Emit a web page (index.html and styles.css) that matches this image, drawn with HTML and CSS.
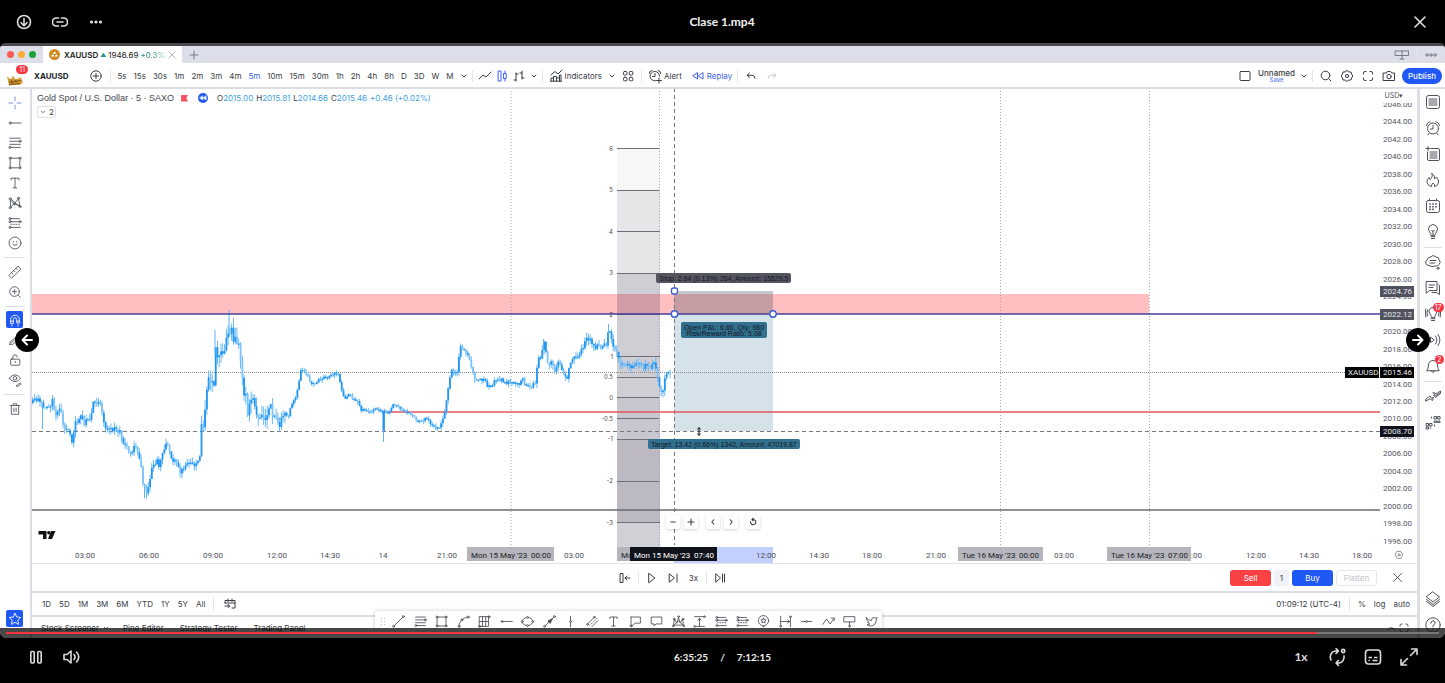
FILE: index.html
```html
<!DOCTYPE html>
<html lang="en">
<head>
<meta charset="utf-8">
<title>Clase 1.mp4</title>
<link rel="stylesheet" href="styles.css">
</head>
<body>
<svg class="defs" aria-hidden="true">
  <symbol id="download" viewBox="0 0 16 16"><circle cx="8" cy="8" r="6.500"/><path d="M8 4.500v7M5 8.700l3 3 3-3"/></symbol>
  <symbol id="link" viewBox="0 0 16 16"><path d="M6.500 4H4.500a4 4 0 0 0 0 8h2M9.500 4h2a4 4 0 0 1 0 8h-2M5 8h6"/></symbol>
  <symbol id="more" viewBox="0 0 16 16"><g fill="currentColor" stroke="none"><circle cx="3.500" cy="8" r="1.600"/><circle cx="8" cy="8" r="1.600"/><circle cx="12.500" cy="8" r="1.600"/></g></symbol>
  <symbol id="close" viewBox="0 0 16 16"><path d="M3 3l10 10M13 3L3 13"/></symbol>
  <symbol id="plus" viewBox="0 0 16 16"><path d="M8 4v8M4 8h8"/></symbol>
  <symbol id="minus" viewBox="0 0 16 16"><path d="M5 8h6"/></symbol>
  <symbol id="pluscircle" viewBox="0 0 16 16"><circle cx="8" cy="8" r="5.200"/><path d="M8 5.300v5.400M5.300 8h5.400"/></symbol>
  <symbol id="down" viewBox="0 0 16 16"><path d="M6 7l2 2 2-2"/></symbol>
  <symbol id="up" viewBox="0 0 16 16"><path d="M4 10q4-5 8 0"/></symbol>
  <symbol id="left" viewBox="0 0 16 16"><path d="M9 5L6.500 8 9 11"/></symbol>
  <symbol id="right" viewBox="0 0 16 16"><path d="M7 5l2.500 3L7 11"/></symbol>
  <symbol id="reset" viewBox="0 0 16 16"><path d="M4.800 7.500a3.500 3.500 0 1 0 3.500-2.800H6.500M8.300 2.800L6.500 4.700l1.800 1.900"/></symbol>
  <symbol id="line" viewBox="0 0 16 16"><path d="M2 11l4-4 3 2 5-5"/></symbol>
  <symbol id="candles" viewBox="0 0 16 16"><path d="M4.500 3h2.500v10H4.500zM11 3v2.500M11 10.500V13M9.800 5.500h2.400v5H9.800z"/></symbol>
  <symbol id="bars" viewBox="0 0 16 16"><path d="M5 5v8M3 12h2M5 6h2M11 3v8M9 5h2M11 10h2"/></symbol>
  <symbol id="indicators" viewBox="0 0 16 16"><path d="M3 7l4-3.500L10 6l4-4M3 13v-3h2.500v3M5.500 11.500V8.500h3V13M8.500 10h3v3M11.500 13V7H13v6M2.500 13.200h11"/></symbol>
  <symbol id="grid4" viewBox="0 0 16 16"><rect x="3.500" y="3.500" width="3.500" height="3.500" rx="1"/><rect x="9.300" y="3.500" width="3.500" height="3.500" rx="1"/><rect x="3.500" y="9.300" width="3.500" height="3.500" rx="1"/><rect x="9.300" y="9.300" width="3.500" height="3.500" rx="1"/></symbol>
  <symbol id="alert" viewBox="0 0 16 16"><path d="M12.500 8a4.700 4.700 0 1 0-4 4.800M8 5.500V8.500H5.500M2.500 5.500L2.800 3.600 5 2.500M11 2.500l2.200 1.100.3 1.900M12 10v5M9.500 12.500h5"/></symbol>
  <symbol id="rewind" viewBox="0 0 16 16"><path d="M7.500 5v6L3 8zM13 5v6L8.500 8z"/></symbol>
  <symbol id="undo" viewBox="0 0 16 16"><path d="M6.500 5L4 7.300l2.500 2.300M4.300 7.300H9q3 0 3 3"/></symbol>
  <symbol id="redo" viewBox="0 0 16 16"><path d="M9.500 5L12 7.300 9.500 9.600M11.700 7.300H7q-3 0-3 3"/></symbol>
  <symbol id="square" viewBox="0 0 16 16"><rect x="3" y="3.500" width="10" height="9" rx="1"/></symbol>
  <symbol id="search" viewBox="0 0 16 16"><circle cx="7.500" cy="7.500" r="4.300"/><path d="M10.700 10.700L13 13"/></symbol>
  <symbol id="gear" viewBox="0 0 16 16"><path d="M8 2.500l1.800 1.400 2.200.1.600 2.100 1.200 1.900-1.200 1.900-.6 2.100-2.200.1L8 13.500l-1.800-1.400-2.200-.1-.6-2.100L2.200 8l1.200-1.900L4 4l2.200-.1z"/><circle cx="8" cy="8" r="1.600"/></symbol>
  <symbol id="full" viewBox="0 0 16 16"><path d="M3.500 6V5q0-1.500 1.500-1.500h1M10 3.500h1q1.500 0 1.500 1.500v1M12.500 10v1q0 1.500-1.500 1.500h-1M6 12.500H5q-1.500 0-1.500-1.500v-1"/></symbol>
  <symbol id="camera" viewBox="0 0 16 16"><path d="M2.500 5h3L6.300 3.500h3.400L10.500 5h3v7.500h-11z"/><circle cx="8" cy="8.600" r="2.200"/></symbol>
  <symbol id="layout" viewBox="0 0 16 16"><path d="M1.500 4h13v4.500h-13zM8 4v8M6 12h4"/></symbol>
  <symbol id="dots" viewBox="0 0 16 16"><circle cx="4" cy="8" r="1.200"/><circle cx="8" cy="8" r="1.200"/><circle cx="12" cy="8" r="1.200"/></symbol>
  <symbol id="cross" viewBox="0 0 16 16"><path d="M8 1v4.500M8 10.500V15M1 8h4.500M10.500 8H15"/></symbol>
  <symbol id="hray" viewBox="0 0 16 16"><circle cx="2.500" cy="8" r="1.200"/><path d="M3.700 8H15"/></symbol>
  <symbol id="fib" viewBox="0 0 16 16"><path d="M2 2.500h12M2 6h10.500M2 9.500h12M3.600 13H14"/><circle cx="13.800" cy="6" r="1.200"/><circle cx="2.200" cy="13" r="1.200"/></symbol>
  <symbol id="rect" viewBox="0 0 16 16"><path d="M3.700 2.500h8.600M3.700 13.500h8.600M2.500 3.700v8.600M13.500 3.700v8.600"/><circle cx="2.500" cy="2.500" r="1.200"/><circle cx="13.500" cy="2.500" r="1.200"/><circle cx="2.500" cy="13.500" r="1.200"/><circle cx="13.500" cy="13.500" r="1.200"/></symbol>
  <symbol id="text" viewBox="0 0 16 16"><path d="M3.500 4.500v-2h9v2M8 2.500v11M6 13.500h4"/></symbol>
  <symbol id="pattern" viewBox="0 0 16 16"><path d="M2.800 12V4.500l4.200 4.500 5-6 1.500 8L7 9l-4 3.500M4 4l9 8"/><circle cx="2.500" cy="3.300" r="1.200"/><circle cx="2.500" cy="13.300" r="1.200"/><circle cx="12" cy="2.600" r="1.200"/><circle cx="13.800" cy="12" r="1.200"/><circle cx="7" cy="9" r="1.100"/></symbol>
  <symbol id="position" viewBox="0 0 16 16"><path d="M3.600 3H13M3.600 6.500h8.800M3.600 13H14"/><path d="M3 9.500h11" stroke-dasharray="1 2"/><circle cx="2.300" cy="3" r="1.200"/><circle cx="2.300" cy="6.500" r="1.200"/><circle cx="13.700" cy="6.500" r="1.200"/><circle cx="2.300" cy="13" r="1.200"/></symbol>
  <symbol id="smile" viewBox="0 0 16 16"><circle cx="8" cy="8" r="6.800"/><path d="M5.500 9.500q2.500 2.800 5 0M6 6v.9M10 6v.9"/></symbol>
  <symbol id="ruler" viewBox="0 0 16 16"><path d="M1.200 11.500L11.500 1.200l3.300 3.300L4.500 14.800zM4 8.700l1.500 1.500M6.500 6.200L8 7.700M9 3.700l1.500 1.500"/></symbol>
  <symbol id="zoomin" viewBox="0 0 16 16"><circle cx="7.500" cy="7.500" r="5.500"/><path d="M11.500 11.500L14 14M7.500 5.200v4.600M5.200 7.500h4.600"/></symbol>
  <symbol id="magnet" viewBox="0 0 16 16"><path d="M3 11.500V7.500a5 5 0 0 1 10 0v4h-3V7.500a2 2 0 0 0-4 0v4zM3 9.300h3M10 9.300h3M4.500 13.500V15M11.500 13.500V15"/></symbol>
  <symbol id="pencil" viewBox="0 0 16 16"><path d="M2 13q0-4 3-5l6-5 3 2-6 6q-2 3-6 2zM4 11l7-6"/></symbol>
  <symbol id="lock" viewBox="0 0 16 16"><rect x="3" y="7" width="10.500" height="7" rx="1"/><path d="M5.500 7V4.500a2.500 2.500 0 0 1 5 0M8.300 9.500v1.500"/></symbol>
  <symbol id="eye" viewBox="0 0 16 16"><path d="M1.500 6q6.500-8 13 0-6.500 8-13 0zM9.500 14.500l4-3 1.500 1-3 2.500z"/><circle cx="8" cy="6" r="2"/></symbol>
  <symbol id="trash" viewBox="0 0 16 16"><path d="M2.500 4h11M6 4V2h4v2M3.800 4v10h8.400V4M6.700 7v4M9.300 7v4"/></symbol>
  <symbol id="star" viewBox="0 0 16 16"><path d="M8 1.500l2 4.200 4.500.6-3.300 3.200.8 4.600L8 11.800l-4 2.300.8-4.600L1.500 6.300 6 5.700z"/></symbol>
  <symbol id="watch" viewBox="0 0 16 16"><rect x="1.500" y="1.500" width="13" height="13" rx="2"/><path d="M4 5h8M4 7h8M4 9h8M4 11h8"/></symbol>
  <symbol id="clock" viewBox="0 0 16 16"><circle cx="8" cy="8.500" r="5.500"/><path d="M8 5.500v3.500H5.500M1.500 5.500q0-3 3.500-3.800M14.500 5.500q0-3-3.500-3.800M4 13.500l-1 1.500M12 13.500l1 1.500"/></symbol>
  <symbol id="addlist" viewBox="0 0 16 16"><path d="M6 2.500h7q1.500 0 1.500 1.500v9q0 1.500-1.500 1.500H4q-1.500 0-1.500-1.500V6M3 .5v4M1 2.500h4M5 6h7M5 8h7M5 10h7M5 12h7"/></symbol>
  <symbol id="flame" viewBox="0 0 16 16"><path d="M7 1.500q3.500 2.500 2.500 5.500L11.500 5q3.500 4 1.500 7-1.500 2.500-3.500 2.500 1-2-1.500-3.500-1.800 2-1.500 3.500Q3 14 2 10.500q-.5-3 2-5l1 2q3-2 2-6z"/></symbol>
  <symbol id="calendar" viewBox="0 0 16 16"><rect x="1.500" y="2.500" width="13" height="12" rx="2"/><path d="M4.500 1v1.500M11.500 1v1.500"/><path d="M4.200 6h8M4.200 8.700h8M4.200 11.400h5" stroke-linecap="butt" stroke-width="1.600" stroke-dasharray="1.600 1.400"/></symbol>
  <symbol id="bulb" viewBox="0 0 16 16"><path d="M6 11q0-1.500-1.500-3a4.500 4.500 0 1 1 7 0Q10 9.500 10 11zM6 12.700h4M6.500 14.500h3M8 11V7M6.700 6.500L8 7.500l1.300-1"/></symbol>
  <symbol id="cloud" viewBox="0 0 16 16"><path d="M3.500 11.500a3 3 0 0 1-1.500-5.500Q2.500 3.200 5.500 3Q8 0 11 3q3 0 3 3 2.500 2.500 0 4.500-1 2-3.500 1.500L7.500 12.500zM5 6.500h6M5 9h4.500"/><circle cx="13" cy="14.300" r="1"/></symbol>
  <symbol id="chat" viewBox="0 0 16 16"><path d="M1.500 1.500h10.500v9H4.500l-3 2.500zM13.500 4.500l1 1v9L11.500 12.500H7M4 5h5.500M4 7.500h4"/></symbol>
  <symbol id="bulbwave" viewBox="0 0 16 16"><path d="M6.300 11q0-1.500-1.300-3a4 4 0 1 1 6 0Q9.700 9.500 9.700 11zM6 12.700h4M6.500 14.500h3M2.500 4q-1.200 3 0 6M.8 3q-1 4 0 8M13.500 4q1.200 3 0 6M15.200 3q1 4 0 8"/></symbol>
  <symbol id="stream" viewBox="0 0 16 16"><path d="M5.500 5.500v5L9 8zM10.500 4q3 4 0 8M13 2.500q4 5.500 0 11"/></symbol>
  <symbol id="bell" viewBox="0 0 16 16"><path d="M2 12.500q1.500-1.500 1.500-5.500a4.500 4.500 0 0 1 9 0q0 4 1.500 5.500zM6.500 12.700a1.500 1.500 0 0 0 3 0"/></symbol>
  <symbol id="dom" viewBox="0 0 16 16"><path d="M.5 11.500L5 8l1.500 2.200 2-.7-1 3L5 10.800 1 13zM8 4.500l2.500 3.500 5-3.500M9 4.500l2 1.500L15.500 3v1.500M8.500 7l2 2.500 5-4"/></symbol>
  <symbol id="objects" viewBox="0 0 16 16"><path d="M9.500 2.500h2V5h-2zM13 2.500h2V5h-2zM1.500 9.500h2V12h-2zM1.500 13h2v2h-2zM5 9.500h2V12H5zM9.500 7h2v1.500h-2zM13 7h2v1.500h-2z"/><path d="M6.500 3v3M9.500 11v3M5 14h2" stroke-dasharray="1 2"/></symbol>
  <symbol id="layers" viewBox="0 0 16 16"><path d="M8 1l6.500 5L8 11 1.500 6zM1.500 8.500L8 13.500l6.500-5M1.500 10.500l6.500 5 6.500-5"/></symbol>
  <symbol id="help" viewBox="0 0 16 16"><circle cx="8" cy="8" r="7.200"/><path d="M5.800 6.300q0-2.500 2.200-2.500t2.200 2.200q0 1.300-2.200 2.500v1.300M8 11.500v.8"/></symbol>
  <symbol id="tostart" viewBox="0 0 16 16"><path d="M3.500 3.500H6v9H3.500zM8 8h5M10 6L8 8l2 2"/></symbol>
  <symbol id="play" viewBox="0 0 16 16"><path d="M5 3.500l6 4.500-6 4.500z"/></symbol>
  <symbol id="step" viewBox="0 0 16 16"><path d="M4.500 4l5 4-5 4zM12 4v8"/></symbol>
  <symbol id="toend" viewBox="0 0 16 16"><path d="M4 4l4.500 4L4 12zM10.500 4v8M12.500 4v8"/></symbol>
  <symbol id="goto" viewBox="0 0 16 16"><path d="M3 7V4.500h10V12h-3M6 3v2.500M10 3v2.500M3 7h10M3 10h4.500M6 8.300l1.700 1.700L6 11.700"/></symbol>
  <symbol id="target" viewBox="0 0 16 16"><path d="M5 2.500h6L14 8l-3 5.500H5L2 8z"/><circle cx="8" cy="8" r="1.800"/></symbol>
  <symbol id="trend" viewBox="0 0 16 16"><circle cx="2" cy="14" r="1.200"/><circle cx="14" cy="2" r="1.200"/><path d="M2.900 13.100L13.100 2.900"/></symbol>
  <symbol id="curve" viewBox="0 0 16 16"><circle cx="2.500" cy="14" r="1.200"/><circle cx="6" cy="6" r="1.200"/><circle cx="13.800" cy="2.500" r="1.200"/><path d="M2.500 12.800q.3-4 2.700-6M7 5.300Q9 3 12.600 2.700"/></symbol>
  <symbol id="gann" viewBox="0 0 16 16"><path d="M2 2h11v12H2zM5.500 2v12M9.500 2v12M2 8h11"/><circle cx="13.500" cy="2.200" r="1.200"/><circle cx="2" cy="14" r="1.200"/></symbol>
  <symbol id="ellipse" viewBox="0 0 16 16"><ellipse cx="8" cy="8" rx="6.500" ry="5"/><circle cx="1.500" cy="8" r="1.200" fill="#fff"/><circle cx="14.500" cy="8" r="1.200" fill="#fff"/><circle cx="8" cy="3" r="1.200" fill="#fff"/><circle cx="8" cy="13" r="1.200" fill="#fff"/></symbol>
  <symbol id="arrow" viewBox="0 0 16 16"><circle cx="2" cy="14" r="1.200"/><circle cx="14" cy="2" r="1.200"/><path d="M3 13L13 3"/><path d="M11.500 4.500L6 7.500 8.500 10z" fill="currentColor"/></symbol>
  <symbol id="vline" viewBox="0 0 16 16"><path d="M8 1.500v5.300M8 9.200v5.300"/><circle cx="8" cy="8" r="1.200"/></symbol>
  <symbol id="channel" viewBox="0 0 16 16"><path d="M2.500 10.500l7-7M7.500 14l7-7"/><path d="M4.500 13L13.500 4" stroke-dasharray="1 2"/><circle cx="1.800" cy="11.500" r="1"/><circle cx="10.200" cy="2.700" r="1"/></symbol>
  <symbol id="callout" viewBox="0 0 16 16"><path d="M2.500 2.500H14V10H7.500L3.500 13.500M2.500 2.500v10"/><circle cx="2.500" cy="13.500" r="1.200"/></symbol>
  <symbol id="comment" viewBox="0 0 16 16"><path d="M2 2.500h12.500v8.500H7.500L5 13.500V11H2z"/></symbol>
  <symbol id="crown" viewBox="0 0 16 16"><path d="M2 12l1-7 3 5 2-7 2 7 3-5 1 7zM3 12l5-5 5 5"/><circle cx="8" cy="2" r="1"/><circle cx="2.500" cy="5" r="1"/><circle cx="13.500" cy="5" r="1"/><circle cx="1.500" cy="13.500" r="1"/><circle cx="14.500" cy="13.500" r="1"/></symbol>
  <symbol id="range" viewBox="0 0 16 16"><path d="M2 2h11M3.500 14H14M8 14V4M6 6.500L8 4l2 2.500"/><circle cx="14" cy="2" r="1"/><circle cx="2" cy="14" r="1"/></symbol>
  <symbol id="daterange" viewBox="0 0 16 16"><path d="M2 1.500v11M14 3.500v11M2 8h11M10.500 6L13 8l-2.500 2"/><circle cx="2" cy="13.800" r="1"/><circle cx="14" cy="2.200" r="1"/></symbol>
  <symbol id="pin" viewBox="0 0 16 16"><circle cx="8" cy="7" r="6.300"/><path d="M8 3.800l1 2 2.200.3-1.600 1.500.4 2.200L8 8.800 6 9.800l.4-2.200L4.800 6.100 7 5.800zM7 13.500l1 1.500 1-1.500"/></symbol>
  <symbol id="hline" viewBox="0 0 16 16"><path d="M1.500 8h5.300M9.200 8h5.300"/><circle cx="8" cy="8" r="1.200"/></symbol>
  <symbol id="poly" viewBox="0 0 16 16"><path d="M1 11.500L5.500 5l4.500 6 5-7M11.500 3.800H15V7"/></symbol>
  <symbol id="sign" viewBox="0 0 16 16"><path d="M1.500 2h13v6.500h-13zM8 8.500v4"/><circle cx="8" cy="13.700" r="1.100"/></symbol>
  <symbol id="bird" viewBox="0 0 16 16"><path d="M1.500 3.500q3 3.500 6.500 3.300Q8 3 11 3q1.500 0 2.200.9l1.800-.6-1.100 2Q14 13 7 13.500q-2.800 0-4.500-1.500 2.500 0 3.500-1-2.300-.7-2.800-2.500h1.300Q1.500 7 1.500 3.500z"/></symbol>
  <symbol id="pause" viewBox="0 0 20 20"><rect x="4.800" y="4.500" width="3.400" height="11.500" rx="1"/><rect x="11.800" y="4.500" width="3.400" height="11.500" rx="1"/></symbol>
  <symbol id="volume" viewBox="0 0 20 20"><path d="M2 7.500h3l4-3.500v12l-4-3.500H2zM12 7.500q2 2.500 0 5M14.500 5q4.500 5 0 10"/></symbol>
  <symbol id="loop" viewBox="0 0 20 20"><path d="M4 13A6 6 0 0 1 8.500 4h2.500M9 1.500L11.500 4 9 6.500M17 9a6 6 0 0 1-4.500 7H9M11.500 13.500L9 16l2.500 2.500"/><circle cx="16.200" cy="4" r="1.600"/></symbol>
  <symbol id="captions" viewBox="0 0 20 20"><rect x="2.500" y="3" width="15" height="14" rx="3"/><path d="M5.500 10.500h3.500M11 10.500h3.500M5.500 13.500H7M9.500 13.500h5" stroke-linecap="butt"/></symbol>
  <symbol id="expand" viewBox="0 0 20 20"><path d="M11.500 8.500L18 2M12.500 2H18v5.500M8.500 11.500L2 18M2 12.500V18h5.500"/></symbol>
  <symbol id="arrowleft" viewBox="0 0 16 16"><path d="M13 8H3.500M8 3.500L3.500 8 8 12.500"/></symbol>
  <symbol id="arrowright" viewBox="0 0 16 16"><path d="M3 8h9.500M8 3.500L12.500 8 8 12.500"/></symbol>
</svg>

<header class="player-head">
  <div class="head-tools">
    <button aria-label="Download"><svg class="ic"><use href="#download"/></svg></button>
    <button aria-label="Copy link"><svg class="ic"><use href="#link"/></svg></button>
    <button aria-label="More"><svg class="ic"><use href="#more"/></svg></button>
  </div>
  <h1>Clase 1.mp4</h1>
  <div class="head-close"><button aria-label="Close"><svg class="ic"><use href="#close"/></svg></button></div>
</header>

<main class="stage">
  <div class="tabs">
    <div class="lights"><i class="red"></i><i class="amber"></i><i class="green"></i></div>
    <div class="tab">
      <svg class="coin" viewBox="0 0 10 10"><circle cx="5" cy="5" r="5" fill="#cf8a20"/><path d="M3.700 4.300l.6-1.500h1.400l.6 1.500zM1.900 6.900l.6-1.700h1.700l.6 1.700zM5.200 6.900l.6-1.700h1.700l.6 1.700z" fill="#fff"/></svg>
      <b>XAUUSD</b><span class="tri">▲</span><span class="quote">1946.69</span><span class="gain">+0.3%</span>
      <button aria-label="Close tab"><svg class="ic"><use href="#close"/></svg></button>
    </div>
    <button class="newtab" aria-label="New tab"><svg class="ic"><use href="#plus"/></svg></button>
    <div class="tabs-end"><button aria-label="Layout"><svg class="ic"><use href="#layout"/></svg></button><i class="vsep"></i><button aria-label="Menu"><svg class="ic"><use href="#dots"/></svg></button></div>
  </div>

  <div class="toolbar">
    <button class="avatar" aria-label="Account"><svg viewBox="0 0 18 12"><path d="M1 3l4 3 2-4 2 4 6-2 1 3 1 1-2 3-12 1z" fill="#d79a35"/><path d="M3 9l12-2M5 6l1 4M9 6l2 3M3 11l11-1" stroke="#7c4d12" fill="none"/></svg><span class="badge">11</span></button>
    <button class="symbol">XAUUSD</button>
    <button class="compare" aria-label="Compare"><svg class="ic"><use href="#pluscircle"/></svg></button><i class="vsep"></i>
    <div class="frames"><button>5s</button><button>15s</button><button>30s</button><button>1m</button><button>2m</button><button>3m</button><button>4m</button><button class="on">5m</button><button>10m</button><button>15m</button><button>30m</button><button>1h</button><button>2h</button><button>4h</button><button>8h</button><button>D</button><button>3D</button><button>W</button><button>M</button></div>
    <button aria-label="More intervals"><svg class="ic"><use href="#down"/></svg></button><i class="vsep"></i>
    <div class="styles"><button aria-label="Line"><svg class="ic"><use href="#line"/></svg></button><button class="on" aria-label="Candles"><svg class="ic"><use href="#candles"/></svg></button><button aria-label="Bars"><svg class="ic"><use href="#bars"/></svg></button><button class="tight" aria-label="More styles"><svg class="ic"><use href="#down"/></svg></button></div><i class="vsep"></i>
    <button class="label first"><svg class="ic"><use href="#indicators"/></svg>Indicators</button>
    <button aria-label="Favourite indicators"><svg class="ic"><use href="#down"/></svg></button>
    <button aria-label="Templates"><svg class="ic"><use href="#grid4"/></svg></button><i class="vsep wide"></i>
    <button class="label"><svg class="ic"><use href="#alert"/></svg>Alert</button>
    <button class="label replay on"><svg class="ic"><use href="#rewind"/></svg>Replay</button><i class="vsep wide"></i>
    <button aria-label="Undo"><svg class="ic"><use href="#undo"/></svg></button>
    <button class="faint" aria-label="Redo"><svg class="ic"><use href="#redo"/></svg></button>
    <div class="toolbar-end">
      <button aria-label="Layout"><svg class="ic"><use href="#square"/></svg></button>
      <button class="saved"><span>Unnamed</span><small>Save</small></button>
      <button class="narrow" aria-label="Layouts"><svg class="ic"><use href="#down"/></svg></button><i class="vsep"></i>
      <button aria-label="Search"><svg class="ic"><use href="#search"/></svg></button>
      <button aria-label="Settings"><svg class="ic"><use href="#gear"/></svg></button>
      <button aria-label="Fullscreen"><svg class="ic"><use href="#full"/></svg></button>
      <button aria-label="Snapshot"><svg class="ic"><use href="#camera"/></svg></button>
      <button class="publish">Publish</button>
    </div>
  </div>

  <div class="work">
    <nav class="rail left-rail">
      <button class="blue" aria-label="Cross"><svg class="ic"><use href="#cross"/></svg></button>
      <button aria-label="Ray"><svg class="ic"><use href="#hray"/></svg></button>
      <button aria-label="Fibonacci"><svg class="ic"><use href="#fib"/></svg></button>
      <button aria-label="Rectangle"><svg class="ic"><use href="#rect"/></svg></button>
      <button aria-label="Text"><svg class="ic"><use href="#text"/></svg></button>
      <button aria-label="Pattern"><svg class="ic"><use href="#pattern"/></svg></button>
      <button aria-label="Position"><svg class="ic"><use href="#position"/></svg></button>
      <button aria-label="Icons"><svg class="ic"><use href="#smile"/></svg></button>
      <i class="hsep"></i>
      <button aria-label="Measure"><svg class="ic"><use href="#ruler"/></svg></button>
      <button aria-label="Zoom in"><svg class="ic"><use href="#zoomin"/></svg></button>
      <i class="hsep"></i>
      <button class="solid" aria-label="Magnet"><svg class="ic"><use href="#magnet"/></svg></button>
      <button aria-label="Keep drawing"><svg class="ic"><use href="#pencil"/></svg></button>
      <button aria-label="Lock"><svg class="ic"><use href="#lock"/></svg></button>
      <button aria-label="Hide"><svg class="ic"><use href="#eye"/></svg></button>
      <i class="hsep"></i>
      <button aria-label="Remove"><svg class="ic"><use href="#trash"/></svg></button>
      <button class="solid last" aria-label="Favourites"><svg class="ic"><use href="#star"/></svg></button>
    </nav>

    <section class="center">
      <div class="chart">
        <div class="plot-col">
          <svg class="plot" role="img" aria-label="Gold Spot price chart">
            <g transform="translate(-32 -89)">
              <rect x="32" y="294" width="1117" height="20" fill="#ffbfc1"/>
              <g fill="#3a3350">
                <rect x="617" y="149" width="43" height="41" opacity=".04"/>
                <rect x="617" y="190" width="43" height="83" opacity=".13"/>
                <rect x="617" y="273" width="43" height="124" opacity=".24"/>
                <rect x="617" y="397" width="43" height="42" opacity=".28"/>
                <rect x="617" y="439" width="43" height="83" opacity=".34"/>
                <rect x="617" y="522" width="43" height="30" opacity=".23"/>
              </g>
              <path class="level" d="M617 148.500h43M617 190.500h43M617 231.500h43M617 273.500h43M617 314.500h43M617 356.500h43M617 377.500h43M617 397.500h43M617 418.500h43M617 439.500h43M617 481.500h43M617 522.500h43"/>
              <rect x="674" y="291" width="99" height="23" fill="#55586a" opacity=".33"/>
              <rect x="674" y="314" width="99" height="117" fill="#2f6f96" opacity=".2"/>
              <path class="dotted" d="M511 88V548M659.500 88V548M1000.500 88V548M1149.500 88V548"/>
              <path class="dashed" d="M674.500 88V548"/>
              <line class="last-price" x1="32" x2="120%" y1="372.500" y2="372.500"/>
              <line x1="383" x2="120%" y1="412" y2="412" stroke="#e0565b" stroke-width="1.500"/>
              <line class="dashed" x1="32" x2="120%" y1="431.500" y2="431.500"/>
              <line x1="32" x2="120%" y1="510" y2="510" stroke="#6c6970" stroke-width="1.500"/>
              <g id="series"></g>
              <line x1="32" x2="120%" y1="314" y2="314" stroke="#4a3d99" stroke-width="1.500"/>
              <g class="level-text">
                <text x="613" y="151">6</text><text x="613" y="192">5</text><text x="613" y="234">4</text><text x="613" y="275">3</text><text x="613" y="317">2</text><text x="613" y="359">1</text><text x="613" y="379">0.5</text><text x="613" y="400">0</text><text x="613" y="421">-0.5</text><text x="613" y="441">-1</text><text x="613" y="483">-2</text><text x="613" y="525">-3</text>
              </g>
              <rect x="656" y="273" width="135" height="10" rx="2" fill="#555562"/>
              <rect x="681" y="322" width="86" height="16" rx="2" fill="#31708f"/>
              <rect x="648" y="439" width="152" height="10" rx="2" fill="#31708f"/>
              <g class="tip-text">
                <text x="724" y="281">Stop: 2.64 (0.13%) 264, Amount: 15529.5</text>
                <text x="724" y="330">Open P&amp;L: 6.66, Qty: 980</text>
                <text x="724" y="336">Risk/Reward Ratio: 5.08</text>
                <text x="724" y="447">Target: 13.42 (0.66%) 1342, Amount: 47019.87</text>
              </g>
              <g fill="#fff" stroke="#3d5fd0" stroke-width="1.400"><rect x="671.500" y="288" width="6" height="6" rx="2"/><circle cx="674.500" cy="314" r="3.200"/><circle cx="773" cy="314" r="3.200"/></g>
              <path d="M699 428v7M697.500 429.500L699 427.500l1.500 2M697.500 433.500l1.500 2 1.500-2" stroke="#111" fill="none"/>
              <g fill="#111"><path d="M38.500 531h8v8h-3.500v-4.500h-4.500zM51 531h4.500l-3.500 8h-4z"/><circle cx="48.800" cy="532.700" r="1.700"/></g>
            </g>
          </svg>
          <svg class="times" role="img" aria-label="Time axis">
            <g transform="translate(-32 -545)">
              <rect x="617" y="545" width="43" height="3" fill="#d2d0d8"/>
              <rect x="674" y="547" width="99" height="16" fill="#c3cfff"/>
              <g class="time-text">
                <text x="85" y="558">03:00</text><text x="149" y="558">06:00</text><text x="213" y="558">09:00</text><text x="277" y="558">12:00</text><text x="330" y="558">14:30</text><text x="383" y="558">14</text><text x="447" y="558">21:00</text><text x="574" y="558">03:00</text><text x="766" y="558">12:00</text><text x="819" y="558">14:30</text><text x="872" y="558">18:00</text><text x="936" y="558">21:00</text><text x="1064" y="558">03:00</text><text x="1192" y="558">09:00</text><text x="1256" y="558">12:00</text><text x="1309" y="558">14:30</text><text x="1362" y="558">18:00</text>
              </g>
              <g fill="#b5b5bb"><rect x="467" y="547" width="87" height="14"/><rect x="617" y="547" width="30" height="14"/><rect x="958" y="547" width="85" height="14"/><rect x="1107" y="547" width="84" height="14"/></g>
              <g class="flag-text"><text x="471" y="558">Mon 15 May '23</text><text x="531" y="558">00:00</text><text x="621" y="558">Mon</text><text x="962" y="558">Tue 16 May '23</text><text x="1019" y="558">00:00</text><text x="1111" y="558">Tue 16 May '23</text><text x="1168" y="558">07:00</text></g>
              <rect x="630" y="547" width="87" height="14" fill="#11131c"/>
              <g class="flag-text light"><text x="634" y="558">Mon 15 May '23</text><text x="694" y="558">07:40</text></g>
            </g>
          </svg>
        </div>
        <div class="prices">
          <div class="scale"><span>2046.00</span><span>2044.00</span><span>2042.00</span><span>2040.00</span><span>2038.00</span><span>2036.00</span><span>2034.00</span><span>2032.00</span><span>2030.00</span><span>2028.00</span><span>2026.00</span><span>2024.00</span><span>2022.00</span><span>2020.00</span><span>2018.00</span><span>2016.00</span><span>2014.00</span><span>2012.00</span><span>2010.00</span><span>2008.00</span><span>2006.00</span><span>2004.00</span><span>2002.00</span><span>2000.00</span><span>1998.00</span><span>1996.00</span></div>
          <button class="axis-gear" aria-label="Axis settings"><svg class="ic"><use href="#target"/></svg></button>
          <button class="currency">USD<span>▾</span></button>
          <span class="flag stop">2024.76</span><span class="flag entry">2022.12</span><span class="flag last-flag">2015.46</span><span class="flag ticker">XAUUSD</span><span class="flag cursor">2008.70</span>
        </div>
        <div class="legend">
          <div class="legend-row"><span class="name">Gold Spot / U.S. Dollar · 5 · SAXO</span><i class="market"></i><i class="rew"><svg class="ic"><use href="#rewind"/></svg></i>
            <span class="ohlc">O<b>2015.00</b></span><span class="ohlc">H<b>2015.81</b></span><span class="ohlc">L<b>2014.66</b></span><span class="ohlc">C<b>2015.46</b></span><span class="ohlc"><b>+0.46 (+0.02%)</b></span></div>
          <button class="count"><svg class="ic"><use href="#down"/></svg>2</button>
        </div>
        <div class="chart-nav"><button aria-label="Zoom out"><svg class="ic"><use href="#minus"/></svg></button><button aria-label="Zoom in"><svg class="ic"><use href="#plus"/></svg></button><button class="apart" aria-label="Scroll left"><svg class="ic"><use href="#left"/></svg></button><button aria-label="Scroll right"><svg class="ic"><use href="#right"/></svg></button><button class="apart" aria-label="Reset"><svg class="ic"><use href="#reset"/></svg></button></div>
      </div>

      <div class="replay-bar">
        <div class="transport"><button aria-label="Jump to"><svg class="ic"><use href="#tostart"/></svg></button><i class="vsep"></i><button aria-label="Play"><svg class="ic"><use href="#play"/></svg></button><button aria-label="Forward"><svg class="ic"><use href="#step"/></svg></button><button class="speed">3x</button><i class="vsep"></i><button aria-label="Real time"><svg class="ic"><use href="#toend"/></svg></button></div>
        <div class="trade"><button class="sell">Sell</button><input aria-label="Quantity" value="1"><button class="buy">Buy</button><button class="flatten">Flatten</button><button class="quit" aria-label="Exit replay"><svg class="ic"><use href="#close"/></svg></button></div>
      </div>

      <div class="range-bar">
        <button>1D</button><button>5D</button><button>1M</button><button>3M</button><button>6M</button><button>YTD</button><button>1Y</button><button>5Y</button><button>All</button><i class="vsep"></i><button aria-label="Go to date"><svg class="ic"><use href="#goto"/></svg></button>
        <div class="range-end"><button>01:09:12 (UTC-4)</button><i class="vsep"></i><button>%</button><button>log</button><button>auto</button></div>
      </div>

      <div class="panel-bar">
        <button>Stock Screener<svg class="ic"><use href="#down"/></svg></button><button>Pine Editor</button><button>Strategy Tester</button><button>Trading Panel</button>
        <div class="panel-end"><button aria-label="Open panel"><svg class="ic"><use href="#up"/></svg></button><button aria-label="Maximize panel"><svg class="ic"><use href="#full"/></svg></button></div>
      </div>

      <div class="drawbar">
        <i class="grip"></i>
        <button aria-label="Trend line"><svg class="ic"><use href="#trend"/></svg></button><button aria-label="Fibonacci"><svg class="ic"><use href="#fib"/></svg></button><button aria-label="Rectangle"><svg class="ic"><use href="#rect"/></svg></button><button aria-label="Curve"><svg class="ic"><use href="#curve"/></svg></button><button aria-label="Gann box"><svg class="ic"><use href="#gann"/></svg></button><button aria-label="Horizontal ray"><svg class="ic"><use href="#hray"/></svg></button><button aria-label="Ellipse"><svg class="ic"><use href="#ellipse"/></svg></button><button aria-label="Arrow"><svg class="ic"><use href="#arrow"/></svg></button><button aria-label="Vertical line"><svg class="ic"><use href="#vline"/></svg></button><button aria-label="Channel"><svg class="ic"><use href="#channel"/></svg></button><button aria-label="Text"><svg class="ic"><use href="#text"/></svg></button><button aria-label="Callout"><svg class="ic"><use href="#callout"/></svg></button><button aria-label="Comment"><svg class="ic"><use href="#comment"/></svg></button><button aria-label="Elliott wave"><svg class="ic"><use href="#crown"/></svg></button><button aria-label="Price range"><svg class="ic"><use href="#range"/></svg></button><button aria-label="Long position"><svg class="ic"><use href="#position"/></svg></button><button aria-label="Short position"><svg class="ic"><use href="#position"/></svg></button><button aria-label="Pin"><svg class="ic"><use href="#pin"/></svg></button><button aria-label="Date range"><svg class="ic"><use href="#daterange"/></svg></button><button aria-label="Horizontal line"><svg class="ic"><use href="#hline"/></svg></button><button aria-label="Polyline"><svg class="ic"><use href="#poly"/></svg></button><button aria-label="Signpost"><svg class="ic"><use href="#sign"/></svg></button><button aria-label="Tweet"><svg class="ic"><use href="#bird"/></svg></button>
      </div>
    </section>

    <nav class="rail right-rail">
      <button aria-label="Watchlist"><svg class="ic"><use href="#watch"/></svg></button>
      <button aria-label="Alerts"><svg class="ic"><use href="#clock"/></svg></button>
      <button aria-label="Data window"><svg class="ic"><use href="#addlist"/></svg></button>
      <button aria-label="Hotlists"><svg class="ic"><use href="#flame"/></svg></button>
      <button aria-label="Calendar"><svg class="ic"><use href="#calendar"/></svg></button>
      <button aria-label="Ideas"><svg class="ic"><use href="#bulb"/></svg></button>
      <i class="hsep"></i>
      <button aria-label="Public chats"><svg class="ic"><use href="#cloud"/></svg></button>
      <button aria-label="Private chats"><svg class="ic"><use href="#chat"/></svg></button>
      <button aria-label="Ideas stream"><svg class="ic"><use href="#bulbwave"/></svg><span class="badge">17</span></button>
      <button aria-label="Streams"><svg class="ic"><use href="#stream"/></svg></button>
      <button aria-label="Notifications"><svg class="ic"><use href="#bell"/></svg><span class="badge">2</span></button>
      <i class="hsep"></i>
      <button aria-label="Order panel"><svg class="ic"><use href="#dom"/></svg></button>
      <button aria-label="Depth of market"><svg class="ic"><use href="#objects"/></svg></button>
      <button class="last" aria-label="Object tree"><svg class="ic"><use href="#layers"/></svg></button>
      <button aria-label="Help"><svg class="ic"><use href="#help"/></svg></button>
    </nav>
  </div>

  <button class="skip prev" aria-label="Previous"><svg class="ic"><use href="#arrowleft"/></svg></button>
  <button class="skip next" aria-label="Next"><svg class="ic"><use href="#arrowright"/></svg></button>
  <div class="seek"><div class="track"><div class="played" style="width:91.5%"></div></div></div>
</main>

<footer class="player-foot">
  <div class="foot-left"><button aria-label="Pause"><svg class="ic"><use href="#pause"/></svg></button><button aria-label="Volume"><svg class="ic"><use href="#volume"/></svg></button></div>
  <div class="clock"><span>6:35:25</span><span>/</span><span>7:12:15</span></div>
  <div class="foot-right"><button>1x</button><button aria-label="Autoplay"><svg class="ic"><use href="#loop"/></svg></button><button aria-label="Captions"><svg class="ic"><use href="#captions"/></svg></button><button aria-label="Fullscreen"><svg class="ic"><use href="#expand"/></svg></button></div>
</footer>
<script src="chart.js"></script>
</body>
</html>
```

FILE: styles.css
```css
* { box-sizing: border-box; }
body { margin: 0; min-height: 100vh; display: flex; flex-direction: column; background: #000; color: #3a3c44; font: 8px/10px Inter, "Liberation Sans", sans-serif; }
button { display: flex; align-items: center; justify-content: center; border: 0; padding: 0; background: none; color: inherit; font: inherit; white-space: nowrap; }
.defs { display: none; }
.ic { width: 16px; height: 16px; flex: none; fill: none; stroke: currentColor; stroke-width: 1; stroke-linecap: round; stroke-linejoin: round; display: block; }
.vsep { width: 1px; height: 12px; background: #e3e4ea; flex: none; }

.player-head { height: 43px; flex: none; display: grid; grid-template-columns: 1fr auto 1fr; align-items: center; padding: 0 17px 0 16px; color: #e0e0e0; }
.player-head .ic { stroke-width: 1.6; }
.player-head h1 { margin: 0; font: bold 12px/16px Lato, sans-serif; color: #f2f2f2; }
.head-tools { display: flex; gap: 20px; }
.head-close { display: flex; justify-content: flex-end; }

.stage { position: relative; flex: 1; display: flex; flex-direction: column; background: #fff; border-top: 3px solid #48484b; border-radius: 5px 5px 7px 7px; overflow: hidden; }
.tabs { height: 17px; flex: none; display: flex; align-items: center; background: #dcdfe9; color: #777a85; }
.lights { display: flex; gap: 4px; padding: 0 7px 0 7px; }
.lights i { width: 7px; height: 7px; border-radius: 50%; }
.red { background: #fc5b50; } .amber { background: #fdaf35; } .green { background: #1aa33c; }
.tab { height: 17px; width: 139px; display: flex; align-items: center; background: #fff; padding: 0 6px 0 6px; color: #222; gap: 2px; }
.tab b { font-weight: 600; }
.tab button { margin-left: auto; color: #888; }
.tab .ic { width: 10px; height: 10px; }
.coin { width: 11px; height: 11px; flex: none; margin-right: 2px; }
.tri { font-size: 6px; }
.tri, .gain { color: #26957f; }
.gain { background: linear-gradient(90deg, #128a70 50%, #c3e2dc); -webkit-background-clip: text; background-clip: text; color: transparent; }
.newtab { margin-left: 4px; }
.tabs-end { margin-left: auto; display: flex; align-items: center; gap: 6px; padding-right: 6px; }

.toolbar { height: 26px; flex: none; display: flex; align-items: center; border-bottom: 2px solid #dcdee6; padding: 2px 0 0 6px; }
.avatar { position: relative; width: 18px; height: 20px; align-items: flex-end; }
.avatar svg { width: 18px; height: 13px; }
.badge { position: absolute; top: -1px; right: -4px; min-width: 8px; height: 9px; padding: 0 3px; border-radius: 5px; background: #f7343f; color: #fff; font-size: 7px; line-height: 9px; }
.symbol { font-weight: 700; color: #202228; margin: 0 20px 0 10px; }
.compare { margin-right: 6px; }
.frames { display: flex; gap: 7px; margin: 0 2px 0 6px; }
.on { color: #3d63e8; }
.styles { display: flex; margin: 0 0 0 4px; gap: 1px; }
.styles .tight { margin-left: -2px; }
.label { gap: 1px; }
.label.first { margin: 0 2px 0 5px; }
.vsep.wide { margin: 0 5px; }
.replay { margin-left: 8px; }
.faint { color: #c9cad0; margin-left: 5px; }
.toolbar-end { margin-left: auto; display: flex; align-items: center; gap: 5px; padding-right: 3px; font-weight: 500; }
.saved { flex-direction: column; line-height: 8px; }
.saved small { font-size: 6px; line-height: 6px; color: #5a7cf0; }
.narrow { width: 8px; margin: 0 -1px 0 0; }
.publish { height: 16px; padding: 0 6px; border-radius: 8px; background: #2058f5; color: #fff; }

.work { flex: 1; display: flex; min-height: 0; }
.rail { flex: none; display: flex; flex-direction: column; align-items: center; color: #50525a; }
.rail button { position: relative; }
.rail .last { margin-top: auto; }
.hsep { height: 1px; background: #dfe0e6; flex: none; }
.left-rail { width: 32px; border-right: 2px solid #dcdee6; padding: 4px 1px 11px 0; }
.left-rail button { width: 17px; height: 20px; }
.left-rail .hsep { width: 21px; margin: 4px 0; }
.left-rail .ic { width: 14px; height: 14px; }
.left-rail .blue { color: #6f86dd; }
.left-rail .solid { background: #2058f5; color: #fff; border-radius: 2px; height: 17px; margin-bottom: 2px; }
.left-rail .solid.last { margin: auto 0 0; }
.right-rail { width: 28px; border-left: 3px solid #dcdee6; }
.right-rail button { width: 22px; height: 26px; }
.right-rail .hsep { width: 18px; margin: 2px 0 1px; }
.right-rail .badge { right: 0; top: 2px; padding: 0 2px; }

.center { position: relative; flex: 1; min-width: 0; display: flex; flex-direction: column; }
.chart { position: relative; flex: 1; display: flex; min-height: 0; border-bottom: 1px solid #e3e4ea; }
.plot-col { flex: 1; min-width: 0; display: flex; flex-direction: column; }
.plot { flex: 1; width: 100%; min-height: 0; display: block; }
.times { width: 100%; height: 18px; flex: none; display: block; }
.level { stroke: #6f6d78; fill: none; }
.dotted { stroke: #a6a6ac; stroke-dasharray: 1 2; fill: none; }
.dashed { stroke: #77777c; stroke-dasharray: 4 3; fill: none; }
.last-price { stroke: #8a8a8a; stroke-dasharray: 1 1; }
.level-text { font-size: 6px; text-anchor: end; fill: #44464e; }
.tip-text { font: 7px "Liberation Sans", sans-serif; text-anchor: middle; fill: #131722; }
.time-text, .flag-text { font: 8px Roboto, sans-serif; fill: #4c4e57; }
.time-text { text-anchor: middle; }
.flag-text { fill: #20222a; }
.flag-text.light { fill: #fff; }
.up { fill: #2196f3; } .dn { fill: #7cc4fa; } .wick { fill: #5db4f7; }

.prices { position: relative; width: 37px; flex: none; display: flex; flex-direction: column; font: 8px/10px Roboto, sans-serif; color: #54565e; }
.scale { flex: 1; display: flex; flex-direction: column; justify-content: space-between; padding: 11px 5px 0 0; text-align: right; }
.scale span { height: 10px; }
.axis-gear { height: 16px; }
.axis-gear .ic { width: 10px; height: 10px; }
.currency { position: absolute; top: 0; left: 0; width: 34px; height: 14px; background: #fff; font-family: Inter, sans-serif; font-size: 7px; padding-right: 6px; }
.flag { position: absolute; left: 0; width: 34px; height: 11px; line-height: 11px; padding-left: 3px; color: #e8e8ec; background: #50525e; }
.stop { top: 197px; } .entry { top: 220px; }
.last-flag { top: 278px; background: #000; }
.ticker { top: 278px; left: -35px; background: #000; }
.cursor { top: 337px; background: #11131c; }

.legend { position: absolute; top: 3px; left: 5px; }
.legend-row { display: flex; align-items: center; height: 12px; gap: 3px; font-size: 8px; }
.name { font: 9px/12px "Liberation Sans", sans-serif; color: #454750; }
.market { width: 7px; height: 7px; margin: 0 7px 0 4px; background: #f7525f; clip-path: polygon(0 0, 100% 0, 75% 50%, 100% 100%, 0 100%); }
.rew { width: 10px; height: 10px; border-radius: 50%; background: #2058f5; color: #fff; margin-right: 6px; }
.rew .ic { width: 10px; height: 10px; fill: currentColor; }
.ohlc b { font-weight: 400; color: #3f9fdf; }
.count { margin-top: 2px; width: 19px; height: 12px; border: 1px solid #dfe0e6; border-radius: 2px; }
.count .ic { width: 12px; height: 12px; margin-left: -2px; }
.chart-nav { position: absolute; left: 634px; bottom: 34px; display: flex; gap: 4px; }
.chart-nav button { width: 14px; height: 14px; background: #fff; border-radius: 2px; box-shadow: 0 1px 3px rgba(0, 0, 0, .18); }
.chart-nav .apart { margin-left: 4px; }
.chart-nav .ic { stroke-width: 1.4; width: 12px; height: 12px; }

.replay-bar { height: 29px; flex: none; display: flex; align-items: center; border-bottom: 2px solid #dcdee6; }
.transport { margin-left: 42%; display: flex; align-items: center; gap: 5px; padding-left: 3px; }
.speed { margin: 0 3px; }
.trade { margin-left: auto; display: flex; align-items: center; gap: 3px; padding-right: 12px; }
.trade button { width: 41px; height: 16px; border-radius: 3px; }
.trade .sell { background: #fb4144; color: #fff; }
.trade .buy { background: #2058f5; color: #fff; }
.trade .flatten { border: 1px solid #e6e7ec; color: #c2c3c9; }
.trade .quit { width: 16px; margin-left: 9px; }
.trade .quit .ic { width: 13px; height: 13px; }
.trade input { width: 15px; height: 16px; border: 0; padding: 0; border-radius: 3px; background: #f0f2f8; text-align: center; font: inherit; color: inherit; }
.range-bar { height: 24px; flex: none; display: flex; align-items: center; gap: 8px; padding: 0 7px 0 10px; border-bottom: 2px solid #dcdee6; }
.range-end { margin-left: auto; display: flex; align-items: center; gap: 8px; }
.panel-bar { height: 21px; flex: none; display: flex; align-items: center; gap: 16px; padding: 0 6px 0 9px; }
.panel-bar button .ic { width: 14px; height: 14px; }
.panel-bar button:first-child { margin-right: -6px; }
.panel-end { margin-left: auto; display: flex; gap: 5px; }
.drawbar { position: absolute; left: 343px; bottom: 6px; width: 507px; height: 21px; display: flex; align-items: center; background: #fff; border-radius: 3px; box-shadow: 0 0 4px rgba(0, 0, 0, .2); color: #44464e; }
.drawbar button { flex: 1; }
.drawbar .ic { width: 13px; height: 13px; }
.grip { width: 6px; height: 9px; margin: 0 2px 0 5px; background: radial-gradient(circle, #bbb 40%, transparent 45%) 0 0 / 3px 3px; flex: none; }

.skip { position: absolute; top: 282px; width: 24px; height: 24px; border-radius: 50%; background: #000; color: #fff; }
.skip .ic { stroke-width: 2; }
.prev { left: 15px; } .next { right: 15px; }
.seek { position: absolute; left: 0; right: 0; bottom: 0; height: 10px; padding: 4px 6px 0; background: rgba(0, 0, 0, .72); }
.track { height: 2px; background: #777; }
.played { height: 2px; background: #f5333a; }

.player-foot { height: 45px; flex: none; display: grid; grid-template-columns: 1fr auto 1fr; align-items: center; padding: 0 26px 7px 26px; color: #dcdcdc; font: bold 12px/16px Lato, sans-serif; }
.player-foot .ic { width: 20px; height: 20px; stroke-width: 1.6; }
.foot-left, .foot-right { display: flex; gap: 16px; }
.foot-right { justify-content: flex-end; }
.foot-right button { width: 20px; }
.clock { display: flex; gap: 12px; font-size: 10px; color: #f0f0f0; }
```

FILE: chart.js
```js
// Price path as x,y pairs; candles are spread evenly along it.
const path = [32,403,37,400,42,407,52,402,55,412,60,412,63,425,68,433,71,443,74,425,80,415,83,422,90,417,93,402,100,405,103,425,107,432,115,428,120,435,123,442,128,453,133,448,137,450,140,463,143,490,147,490,150,473,155,460,158,467,166,442,170,455,172,465,175,457,180,472,185,465,190,462,194,467,199,453,200,432,204,418,207,383,213,383,215,350,220,355,225,342,229,328,233,340,237,340,240,370,245,400,247,415,250,397,255,415,262,415,267,413,270,407,277,423,282,417,287,417,290,407,295,397,300,370,304,372,311,385,317,380,325,377,337,373,342,393,344,399,348,393,352,398,357,402,360,410,370,413,375,408,383,412,388,413,393,404,400,408,410,415,418,422,427,418,432,427,438,428,442,418,445,405,448,383,450,370,456,375,458,357,460,345,467,355,471,370,473,378,478,382,483,378,487,388,493,382,500,380,510,383,517,385,522,380,528,387,535,382,537,360,540,358,543,342,547,363,550,360,554,372,558,362,565,380,570,363,575,357,580,350,588,337,593,348,600,345,605,345,608,330,613,345,618,362,628,368,637,363,645,368,653,365,658,377,660,397,665,377,669,372];
const step = 1.775;
let seed = 11;
function rand() { seed = (seed * 16807) % 2147483647; return seed / 2147483647; }
function priceAt(x) {
  for (let i = 2; i < path.length; i += 2) {
    if (x <= path[i]) {
      const t = (x - path[i - 2]) / (path[i] - path[i - 2]);
      return path[i - 1] + t * (path[i + 1] - path[i - 1]);
    }
  }
  return path[path.length - 1];
}
function swing(x) {
  if (x < 200) return 6;
  if (x < 285) return 11;
  if (x < 440) return 3;
  if (x < 535) return 4;
  return 6;
}
let out = '';
function bar(cls, x, top, w, h) { out += `<rect class="${cls}" x="${x.toFixed(1)}" y="${top.toFixed(1)}" width="${w}" height="${h.toFixed(1)}"/>`; }
let prev = priceAt(32);
for (let x = 32; x < 670; x += step) {
  const s = swing(x);
  const close = priceAt(x) + (rand() - 0.5) * s * 1.2;
  const top = Math.min(prev, close), h = Math.max(1.2, Math.abs(close - prev));
  const a = rand() * s * 0.9, b = rand() * s * 0.9;
  bar('wick', x + 0.4, top - a, 0.9, h + a + b);
  bar(close < prev ? 'up' : (rand() < 0.5 ? 'up' : 'dn'), x, top, 1.8, h);
  prev = close;
}
bar('wick', 42, 405, 1, 24);
bar('wick', 144, 485, 1, 13);
bar('wick', 228.500, 310, 1, 25);
bar('wick', 214.500, 330, 1, 24);
bar('up', 382.500, 412, 2.400, 19);
bar('wick', 383, 430, 1, 12);
bar('wick', 608, 324, 1, 10);
bar('wick', 543, 339, 1, 10);
document.getElementById('series').innerHTML = out;
```
